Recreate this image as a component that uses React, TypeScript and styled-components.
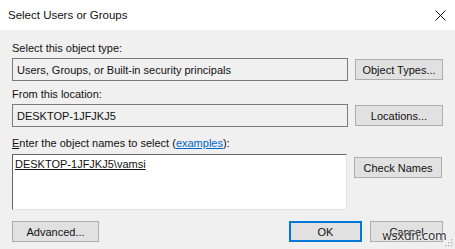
import React from 'react';
import styled, {createGlobalStyle} from 'styled-components';

const GlobalStyle = createGlobalStyle`
    html, body {
        margin: 0;
        padding: 0;
        background: #f0f0f0;
    }
    body {
        font-family: 'Liberation Sans', Arial, sans-serif;
        font-size: 11px;
        color: #111;
    }
`;

const Dialog = styled.div`
    position: relative;
    width: 455px;
    height: 249px;
    display: flex;
    flex-direction: column;
    background: #f0f0f0;
    overflow: hidden;
`;

const TitleBar = styled.div`
    height: 30px;
    flex: none;
    display: flex;
    align-items: center;
    justify-content: space-between;
    background: #fff;
    padding: 0 8px 0 8px;
`;

const Title = styled.div`
    font-size: 11.5px;
    color: #111;
    padding-bottom: 1px;
`;

const CloseIcon = styled.svg`
    width: 11px;
    height: 11px;
    margin-right: 1px;
`;

const Body = styled.div`
    display: flex;
    flex-direction: column;
    padding: 11px 12px 0 12px;
`;

const Label = styled.div<{$gap: number}>`
    line-height: 14px;
    margin-bottom: ${(p) => p.$gap}px;
`;

const Row = styled.div<{$gap: number}>`
    display: flex;
    align-items: flex-start;
    gap: 7px;
    margin-bottom: ${(p) => p.$gap}px;
`;

const ReadOnlyBox = styled.div`
    width: 336px;
    height: 23px;
    box-sizing: border-box;
    border: 1px solid #7a7a7a;
    background: #f0f0f0;
    display: flex;
    align-items: center;
    padding-left: 4px;
`;

const NamesBox = styled.div`
    width: 335px;
    height: 56px;
    box-sizing: border-box;
    border-top: 1px solid #646464;
    border-left: 1px solid #646464;
    border-right: 1px solid #e3e3e3;
    border-bottom: 1px solid #e3e3e3;
    background: #fff;
    padding: 2px 2px;
    line-height: 14px;
`;

const ResolvedName = styled.span`
    text-decoration: underline;
`;

const Button = styled.div<{$width: number; $default?: boolean; $offset?: number}>`
    width: ${(p) => p.$width}px;
    height: 21px;
    margin-top: ${(p) => p.$offset ?? 1}px;
    box-sizing: border-box;
    border: ${(p) => (p.$default ? '2px solid #0078d7' : '1px solid #adadad')};
    background: #e1e1e1;
    display: flex;
    align-items: center;
    justify-content: center;
    color: #111;
`;

const Footer = styled.div`
    display: flex;
    align-items: center;
    margin-top: 11px;
`;

const Spacer = styled.div`
    flex: 1;
`;

const FooterRight = styled.div`
    display: flex;
    gap: 8px;
`;

const Link = styled.span`
    color: #0066cc;
    text-decoration: underline;
`;

const Mnemonic = styled.span`
    text-decoration: underline;
`;

const Watermark = styled.div`
    position: absolute;
    left: 382px;
    top: 229px;
    font-family: 'DejaVu Sans', sans-serif;
    font-size: 12px;
    letter-spacing: -0.4px;
    color: #333;
    text-shadow: 0 0 2px #fff, 0 0 2px #fff;
`;

const Grip = styled.svg`
    position: absolute;
    right: 2px;
    bottom: 2px;
    width: 8px;
    height: 8px;
`;

export default function App() {
    return (
        <>
            <GlobalStyle/>
            <Dialog>
                <TitleBar>
                    <Title>Select Users or Groups</Title>
                    <CloseIcon viewBox='0 0 11 11'>
                        <path d='M0.5 0.5 L10.5 10.5 M10.5 0.5 L0.5 10.5' stroke='#111' strokeWidth='1'/>
                    </CloseIcon>
                </TitleBar>
                <Body>
                    <Label $gap={3}>Select this object type:</Label>
                    <Row $gap={6}>
                        <ReadOnlyBox>Users, Groups, or Built-in security principals</ReadOnlyBox>
                        <Button $width={88}>Object Types...</Button>
                    </Row>
                    <Label $gap={3}>From this location:</Label>
                    <Row $gap={9}>
                        <ReadOnlyBox>DESKTOP-1JFJKJ5</ReadOnlyBox>
                        <Button $width={88}>Locations...</Button>
                    </Row>
                    <Label $gap={4}>
                        <Mnemonic>E</Mnemonic>nter the object names to select (<Link>examples</Link>):
                    </Label>
                    <Row $gap={0}>
                        <NamesBox>
                            <ResolvedName>DESKTOP-1JFJKJ5\vamsi</ResolvedName>
                        </NamesBox>
                        <Button $width={88} $offset={3}>Check Names</Button>
                    </Row>
                    <Footer>
                        <Button $width={87} $offset={0}>Advanced...</Button>
                        <Spacer/>
                        <FooterRight>
                            <Button $width={73} $offset={0} $default>OK</Button>
                            <Button $width={73} $offset={0}>Cancel</Button>
                        </FooterRight>
                    </Footer>
                </Body>
                <Watermark>wsxdn.com</Watermark>
                <Grip viewBox='0 0 8 8'>
                    <rect x='6' y='0' width='1.5' height='1.5' fill='#bbb'/>
                    <rect x='3' y='3' width='1.5' height='1.5' fill='#bbb'/>
                    <rect x='6' y='3' width='1.5' height='1.5' fill='#bbb'/>
                    <rect x='0' y='6' width='1.5' height='1.5' fill='#bbb'/>
                    <rect x='3' y='6' width='1.5' height='1.5' fill='#bbb'/>
                    <rect x='6' y='6' width='1.5' height='1.5' fill='#bbb'/>
                </Grip>
            </Dialog>
        </>
    );
}
